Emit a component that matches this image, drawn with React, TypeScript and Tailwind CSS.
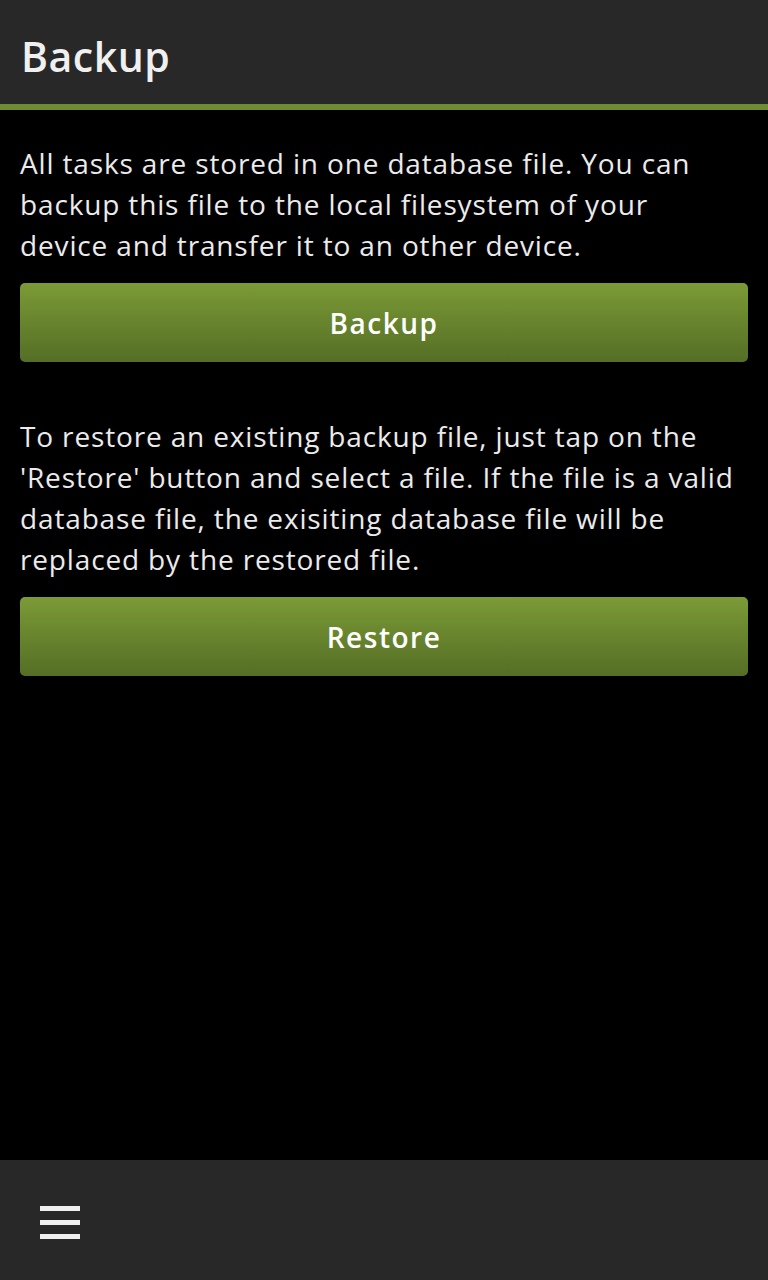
export default function App() {
	return (
		<div
			className="flex flex-col h-[1280px] bg-black text-[#ebebeb]"
			style={{ fontFamily: '"Open Sans", "Noto Sans", sans-serif' }}
		>
			<header className="h-[110px] bg-[#282828] border-b-[6px] border-[#6e8c31] flex items-center px-[21px]">
				<h1 className="text-[41px] font-semibold tracking-[0.5px] text-[#f0f0f0] leading-none mt-[9px]">
					Backup
				</h1>
			</header>
			<main className="flex-1 px-5 pt-[33px]">
				<p className="text-[28px] leading-[41px] tracking-[0.85px]">
					All tasks are stored in one database file. You can
					<br />
					backup this file to the local filesystem of your
					<br />
					device and transfer it to an other device.
				</p>
				<button className="mt-[17px] w-full h-[79px] rounded-[5px] bg-gradient-to-b from-[#7b9b36] to-[#556e25] text-white text-[28px] tracking-[1.5px] font-semibold">
					Backup
				</button>
				<p className="mt-[54px] text-[28px] leading-[41px] tracking-[0.85px]">
					To restore an existing backup file, just tap on the
					<br />
					'Restore' button and select a file. If the file is a valid
					<br />
					database file, the exisiting database file will be
					<br />
					replaced by the restored file.
				</p>
				<button className="mt-[17px] w-full h-[79px] rounded-[5px] bg-gradient-to-b from-[#7b9b36] to-[#556e25] text-white text-[28px] tracking-[1.5px] font-semibold">
					Restore
				</button>
			</main>
			<footer className="h-[120px] bg-[#282828] flex items-start pt-[46px] px-10">
				<div className="flex flex-col gap-[9px]">
					<div className="w-10 h-[5px] bg-[#f0f0f0]" />
					<div className="w-10 h-[5px] bg-[#f0f0f0]" />
					<div className="w-10 h-[5px] bg-[#f0f0f0]" />
				</div>
			</footer>
		</div>
	);
}
